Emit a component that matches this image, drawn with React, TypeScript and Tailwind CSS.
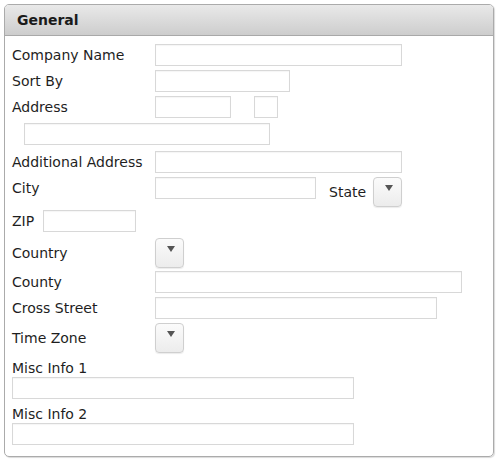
import React from "react";

const TextBox = ({ w }: { w: string }) => (
  <input
    type="text"
    className={`${w} h-[22px] border border-[#d8d8d8] bg-white shadow-[inset_0_1px_1px_rgba(0,0,0,0.04)] outline-none`}
  />
);

const SelectButton = () => (
  <button className="relative w-[29px] h-[30px] rounded-[4px] border border-[#cfcfcf] bg-gradient-to-b from-[#fbfbfb] to-[#ececec] shadow-[0_1px_1px_rgba(0,0,0,0.08)]">
    <span className="absolute left-[11px] top-[7px] w-0 h-0 border-l-[4px] border-r-[4px] border-t-[6px] border-l-transparent border-r-transparent border-t-[#555]" />
  </button>
);

const Label = ({ children }: { children: React.ReactNode }) => (
  <span className="w-[143px] shrink-0 leading-[18px]">{children}</span>
);

export default function App() {
  return (
    <div className="w-[500px] h-[463px] bg-white pt-[4px] pl-[4px] font-['DejaVu_Sans',sans-serif] text-[14px] text-[#1e1e1e]">
      <div className="w-[490px] rounded-[5px] border border-[#ababab] shadow-[1px_1px_1px_rgba(0,0,0,0.15)] overflow-hidden">
        <div className="h-[31px] flex items-center pl-[12px] border-b border-[#a9a9a9] bg-gradient-to-b from-[#e9e9e9] to-[#cdcdcd] font-bold text-[#1a1a1a]">
          General
        </div>
        <div className="pl-[7px] pt-[8px] pb-[11px] flex flex-col">
          <div className="flex items-center h-[22px]">
            <Label>Company Name</Label>
            <TextBox w="w-[247px]" />
          </div>
          <div className="flex items-center h-[22px] mt-[4px]">
            <Label>Sort By</Label>
            <TextBox w="w-[135px]" />
          </div>
          <div className="flex items-center h-[22px] mt-[4px]">
            <Label>Address</Label>
            <TextBox w="w-[76px]" />
            <div className="ml-[23px]">
              <TextBox w="w-[24px]" />
            </div>
          </div>
          <div className="flex items-center h-[22px] mt-[5px] pl-[12px]">
            <TextBox w="w-[246px]" />
          </div>
          <div className="flex items-center h-[22px] mt-[6px]">
            <Label>Additional Address</Label>
            <TextBox w="w-[247px]" />
          </div>
          <div className="flex items-start mt-[4px]">
            <div className="flex items-center h-[22px]">
              <Label>City</Label>
              <TextBox w="w-[161px]" />
            </div>
            <div className="flex items-center h-[30px] ml-[13px]">
              <span className="mr-[7px] leading-[18px]">State</span>
              <SelectButton />
            </div>
          </div>
          <div className="flex items-center h-[22px] mt-[3px]">
            <span className="leading-[18px]">ZIP</span>
            <div className="ml-[9px]">
              <TextBox w="w-[93px]" />
            </div>
          </div>
          <div className="flex items-center h-[30px] mt-[6px]">
            <Label>Country</Label>
            <SelectButton />
          </div>
          <div className="flex items-center h-[22px] mt-[3px]">
            <Label>County</Label>
            <TextBox w="w-[307px]" />
          </div>
          <div className="flex items-center h-[22px] mt-[4px]">
            <Label>Cross Street</Label>
            <TextBox w="w-[282px]" />
          </div>
          <div className="flex items-center h-[30px] mt-[4px]">
            <Label>Time Zone</Label>
            <SelectButton />
          </div>
          <span className="mt-[6px] leading-[18px]">Misc Info 1</span>
          <TextBox w="w-[342px]" />
          <span className="mt-[6px] leading-[18px]">Misc Info 2</span>
          <TextBox w="w-[342px]" />
        </div>
      </div>
    </div>
  );
}
